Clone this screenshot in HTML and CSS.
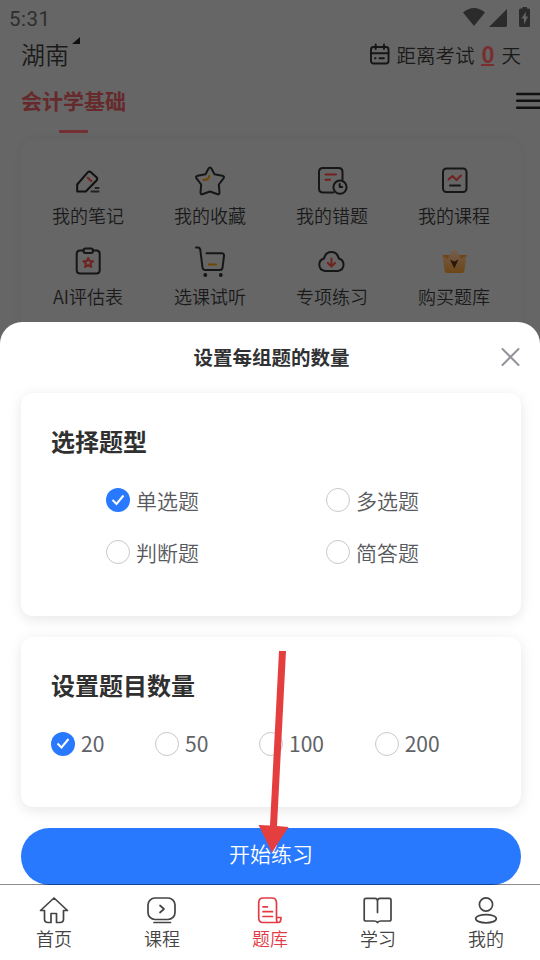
FILE: index.html
```html
<!DOCTYPE html>
<html lang="zh-CN">
<head>
<meta charset="utf-8">
<title>题库</title>
<link rel="stylesheet" href="styles.css">
</head>
<body>
<div class="phone">
  <section class="backdrop">
    <div class="status">
      <span class="clock">5:31</span>
      <svg class="status-icons" width="70" height="22" viewBox="0 0 70 22">
        <path d="M0 5.500Q11-3.500 22 5.500L11 19z"/>
        <path d="M26 20L44 2V18.500Q44 20 42.500 20z"/>
        <path fill-rule="evenodd" d="M57.500 1.500h2V0h4.500v1.500h1.500q1.500 0 1.500 1.500V18.500q0 1.500-1.500 1.500h-8q-1.500 0-1.500-1.500V3q0-1.500 1.500-1.500zM63 4.500l-4.500 7h2.500v6l4-8h-2.500z"/>
      </svg>
    </div>
    <div class="location">
      <div class="city">湖南<i class="corner"></i></div>
      <div class="countdown">
        <svg width="20" height="22" viewBox="0 0 20 22" fill="none" stroke="#161616" stroke-width="1.900" stroke-linecap="round">
          <rect x="1" y="4" width="17.500" height="16.500" rx="2.500"/>
          <path d="M1 10.200h17.500M5.700 1.500v4.500M14 1.500v4.500M5 15.300h.5M9.500 15.300h4.500"/>
        </svg>
        <span>距离考试</span><b>0</b><span>天</span>
      </div>
    </div>
    <div class="subject">
      <div class="subject-tab">会计学基础</div>
      <svg width="24" height="18" viewBox="0 0 24 18" stroke="#111" stroke-width="2.500" stroke-linecap="round"><path d="M1.200 2H26M1.200 8.800H26M1.200 15.700H26"/></svg>
    </div>
    <div class="shortcuts">
      <div class="shortcut">
        <svg viewBox="0 0 32 32"><path d="M5.200 26.500V19.500L15.500 7.700Q17.200 5.600 18.900 7.200L24.500 12.300Q26 13.800 24.500 15.500L13.800 26.500z" stroke="#111"/><path d="M19.500 26.500h7M23.500 23h3" stroke="#222"/><path class="red" d="M15.800 12.700l3.600 3.600"/></svg>
        <span>我的笔记</span>
      </div>
      <div class="shortcut">
        <svg viewBox="0 0 32 32"><path d="M14.300 4Q16 1.200 17.700 4L20.500 9.300L28.300 10.700Q31.200 11.500 29.300 13.700L24.800 19.500L25.500 27.300Q25.600 30 23 29L16 26.500L9 29Q6.400 30 6.500 27.300L7.200 19.500L2.700 13.700Q.8 11.500 3.700 10.700L11.500 9.300z"/><path class="orange" d="M9.500 15Q15 15 15.200 11"/></svg>
        <span>我的收藏</span>
      </div>
      <div class="shortcut">
        <svg viewBox="0 0 32 32"><path d="M26.500 14.500V7q0-4-4-4H7Q3 3 3 7v16.500q0 4 4 4h10.500"/><path class="red" d="M9.500 9.500h10.500M9.500 14.700h4.500"/><circle cx="24" cy="22.200" r="6.600"/><path d="M23.700 19v3h2.500"/></svg>
        <span>我的错题</span>
      </div>
      <div class="shortcut">
        <svg viewBox="0 0 32 32"><rect x="5" y="3.500" width="23.500" height="23.500" rx="3.500"/><path class="red" d="M10.500 14.500l4-3.500 4 4 4.500-4.500"/><path d="M12 20.500h10"/></svg>
        <span>我的课程</span>
      </div>
      <div class="shortcut">
        <svg viewBox="0 0 32 32"><path d="M11.500 4.500H8Q4.700 4.500 4.700 8v16q0 3.500 3.500 3.500h16q3.500 0 3.500-3.500V8q0-3.500-3-3.500h-4"/><rect x="11.500" y="2.500" width="9.500" height="4.500" rx="2"/><path class="red" d="M16.200 12l1.400 3 3.400.3-2.600 2.200.9 3.500-3.100-1.800-3.100 1.800.9-3.500-2.600-2.200 3.400-.3z"/></svg>
        <span>AI评估表</span>
      </div>
      <div class="shortcut">
        <svg viewBox="0 0 32 32"><path d="M2 1.500h2Q6 1.700 6.300 4L8.500 21.500Q8.800 24 11.500 24H26q2.200 0 2.500-2.300L30 10q.3-2.800-2.500-2.800H12.500"/><path class="orange" d="M15 18.500h7"/><g fill="#161616" stroke="none"><circle cx="11.300" cy="29" r="1.900"/><circle cx="26.800" cy="29" r="1.900"/></g></svg>
        <span>选课试听</span>
      </div>
      <div class="shortcut">
        <svg viewBox="0 0 32 32"><path d="M9 25Q3.300 24 3.300 18.500 3.300 14 8 12.500 9.500 6 15.400 6T22.800 12.500Q27.500 14 27.500 18.500 27.500 24 22 25z"/><path class="red" d="M15.400 12.500v7.500M11.800 17l3.600 3.500 3.600-3.500"/></svg>
        <span>专项练习</span>
      </div>
      <div class="shortcut">
        <svg viewBox="0 0 32 32">
          <defs><linearGradient id="crown" x1="0" y1="0" x2="0" y2="1"><stop offset="0" stop-color="#735f50"/><stop offset="1" stop-color="#6d4617"/></linearGradient></defs>
          <path d="M4.500 9h9l-4 9h-3zM28.500 9h-9l4 9h3z" fill="#704416" stroke="none"/>
          <path d="M4.500 10L10 13Q11 9 15.500 4q1-.8 2 0Q22 9 23 13l5.500-3L26.500 24.500Q26.200 27 24 27H9Q6.800 27 6.500 24.500z" fill="url(#crown)" stroke="none"/>
          <path d="M12 13.500l4.300 2 4.200-2-4.200 9z" fill="#291708" stroke="none"/>
        </svg>
        <span>购买题库</span>
      </div>
    </div>
  </section>

  <main class="sheet">
    <header class="sheet-head">
      <h1>设置每组题的数量</h1>
      <svg class="close" width="20" height="20" viewBox="0 0 20 20" fill="none" stroke="#909399" stroke-width="2" stroke-linecap="round"><path d="M2.500 2l16 16M18.500 2L2.500 18"/></svg>
    </header>
    <section class="card types">
      <h2>选择题型</h2>
      <div class="type-grid">
        <label><i class="radio on"><svg viewBox="0 0 24 24"><path d="M6.500 12l4 4 7-8.500"/></svg></i>单选题</label>
        <label><i class="radio"></i>多选题</label>
        <label><i class="radio"></i>判断题</label>
        <label><i class="radio"></i>简答题</label>
      </div>
    </section>
    <section class="card counts">
      <h2>设置题目数量</h2>
      <div class="count-row">
        <label><i class="radio on"><svg viewBox="0 0 24 24"><path d="M6.500 11.500l4 4 7-8.500"/></svg></i><span>20</span></label>
        <label><i class="radio"></i><span>50</span></label>
        <label><i class="radio"></i><span>100</span></label>
        <label><i class="radio"></i><span>200</span></label>
      </div>
    </section>
    <div class="start">开始练习</div>
  </main>

  <nav class="tabs">
    <div class="tab">
      <svg viewBox="0 0 32 30"><path d="M16 3L2.500 15.500H6.500V24Q6.500 27.500 10 27.500H13V18.500h5.500V27.500h3.500q3.500 0 3.500-3.500V15.500h4z"/></svg>首页
    </div>
    <div class="tab">
      <svg viewBox="0 0 32 30"><rect x="2" y="3" width="27" height="21.500" rx="7"/><path d="M14 10.500l4 3.500-4 3.500M8 27.500h16.500"/></svg>课程
    </div>
    <div class="tab active">
      <svg viewBox="0 0 32 30"><path d="M22.500 22V8Q22.500 3 18 3H9Q4.700 3 4.700 8v15q0 4.500 4.300 4.500H24.500q2.500 0 2.500-5H22.500v2.500q0 2 1.500 2.500M9 11.800h4.500M9 16.700h9.500M9 21.500h9.500"/></svg>题库
    </div>
    <div class="tab">
      <svg viewBox="0 0 32 30"><path d="M15.500 17.500V6Q15.500 3.300 13 3.300H4Q2.200 3.300 2.200 5V24.500Q2.200 26 4 26H12Q14.500 26 15.500 27.500 16.500 26 19 26H27.200Q29 26 29 24.500V5Q29 3.300 27.200 3.300H18Q15.500 3.300 15.500 6"/></svg>学习
    </div>
    <div class="tab">
      <svg viewBox="0 0 32 30"><circle cx="16" cy="9.500" r="6.600"/><ellipse cx="16" cy="23.700" rx="10.300" ry="4.100"/></svg>我的
    </div>
  </nav>

  <svg class="pointer" width="31" height="203" viewBox="0 0 31 203"><path d="M21 0h7L19 175l11.500 1L14 201.500 .500 174l11.500.500z" fill="#e43e3e"/></svg>
</div>
</body>
</html>
```
FILE: styles.css
```css
* { box-sizing: border-box; }
body {
  margin: 0;
  font-family: "Noto Sans CJK SC", "Noto Sans", sans-serif;
}
h1, h2 { margin: 0; }
svg { display: block; flex: none; }
.phone {
  position: relative;
  display: flex;
  flex-direction: column;
  width: 540px;
  height: 960px;
  overflow: hidden;
  background: #fff;
}

.backdrop {
  flex: none;
  height: 346px;
  overflow: hidden;
  background: #666;
  color: #1a1a1a;
}
.status {
  display: flex;
  justify-content: space-between;
  align-items: flex-start;
  height: 38px;
  padding: 7px 1px 0 9px;
}
.clock {
  font: 400 20.500px/24px Roboto, sans-serif;
  letter-spacing: .5px;
  color: #2e2e2e;
}
.status-icons { fill: #2b2b2b; margin-right: 6px; }
.location {
  display: flex;
  justify-content: space-between;
  height: 34px;
  padding: 0 19px 0 21px;
}
.city {
  display: flex;
  align-items: flex-start;
  font-size: 24px;
  font-weight: 350;
  line-height: 32px;
}
.corner {
  margin-left: 3px;
  margin-top: -1px;
  border-left: 8px solid transparent;
  border-bottom: 7px solid #111;
}
.countdown {
  display: flex;
  align-items: center;
  height: 32px;
  font-size: 19.500px;
  font-weight: 350;
}
.countdown svg { margin-right: 6px; }
.countdown b {
  margin: 0 7px;
  width: 13px;
  text-align: center;
  font-size: 22px;
  font-weight: 700;
  line-height: 22px;
  color: #7a2d2f;
  border-bottom: 2px solid #7a2d2f;
}
.subject {
  display: flex;
  justify-content: space-between;
  height: 67px;
  padding: 12px 0 0 21px;
}
.subject svg { margin-top: 8px; }
.subject-tab {
  font-size: 21px;
  font-weight: 700;
  line-height: 32px;
  color: #672a2c;
}
.subject-tab::after {
  content: "";
  display: block;
  width: 29px;
  height: 3px;
  margin: 14px 0 0 38px;
  background: #732f32;
  border-radius: 1px;
}
.shortcuts {
  display: grid;
  grid-template-columns: repeat(4, 122px);
  grid-auto-rows: 81px;
  height: 240px;
  margin: 0 19px 0 21px;
  padding: 26px 6px 0;
  border-radius: 15px;
  box-shadow: 0 0 10px rgba(0, 0, 0, .06);
}
.shortcut {
  display: flex;
  flex-direction: column;
  align-items: center;
  font-size: 18px;
  font-weight: 350;
  line-height: 26px;
}
.shortcut svg {
  width: 32px;
  height: 32px;
  margin-bottom: 5px;
  fill: none;
  stroke: #161616;
  stroke-width: 2;
  stroke-linecap: round;
  stroke-linejoin: round;
}
.shortcut .red { stroke: #70221e; }
.shortcut .orange { stroke: #704600; }

.sheet {
  position: relative;
  flex: none;
  height: 563px;
  margin-top: -24px;
  padding: 0 19px 0 21px;
  border-radius: 22px 22px 0 0;
  background: #fff;
}
.sheet-head {
  display: flex;
  align-items: center;
  height: 71px;
  padding-bottom: 2px;
}
.sheet-head h1 {
  flex: 1;
  padding-left: 22px;
  text-align: center;
  font-size: 19.500px;
  font-weight: 700;
  line-height: 28px;
  color: #303133;
}
.close { margin-right: 1px; }
.card {
  padding: 31px 30px 0;
  border-radius: 12px;
  background: #fff;
  box-shadow: 0 3px 14px rgba(0, 0, 0, .1);
}
.card h2 {
  font-size: 24px;
  font-weight: 700;
  line-height: 34px;
  color: #303030;
}
.types { height: 223px; }
.counts { height: 170px; margin-top: 21px; }
.card label {
  display: flex;
  align-items: center;
  gap: 6px;
  font-size: 21px;
  font-weight: 350;
  line-height: 30px;
  color: #58595d;
}
.type-grid {
  display: grid;
  grid-template-columns: 220px 220px;
  grid-auto-rows: 52px;
  align-items: center;
  padding: 16px 0 0 55px;
  margin-right: -30px;
}
.count-row {
  display: flex;
  gap: 50.700px;
  padding-top: 27px;
}
.count-row span {
  margin-top: -1px;
  font-weight: 400;
  color: #606266;
}
.radio {
  flex: none;
  width: 24px;
  height: 24px;
  border: 1px solid #c8c9cc;
  border-radius: 50%;
}
.radio.on { border: 0; background: #2979ff; }
.radio svg { fill: none; stroke: #fff; stroke-width: 2; }
.start {
  height: 57px;
  margin-top: 21px;
  border-radius: 29px;
  background: #2979ff;
  color: #fff;
  font-size: 21px;
  font-weight: 350;
  line-height: 51px;
  text-align: center;
}

.tabs {
  position: relative;
  display: flex;
  flex: none;
  height: 76px;
  margin-top: -1px;
  padding-top: 10px;
  border-top: 1px solid rgba(0, 0, 0, .45);
  background: #fff;
  background-clip: padding-box;
}
.tab {
  display: flex;
  flex-direction: column;
  align-items: center;
  flex: 1;
  font-size: 18px;
  font-weight: 350;
  line-height: 26px;
  color: #444;
}
.tab svg {
  width: 32px;
  height: 30px;
  fill: none;
  stroke: currentColor;
  stroke-width: 1.700;
  stroke-linecap: round;
  stroke-linejoin: round;
}
.tab.active { color: #e23b45; }

.pointer {
  position: absolute;
  left: 258px;
  top: 651px;
}
```
